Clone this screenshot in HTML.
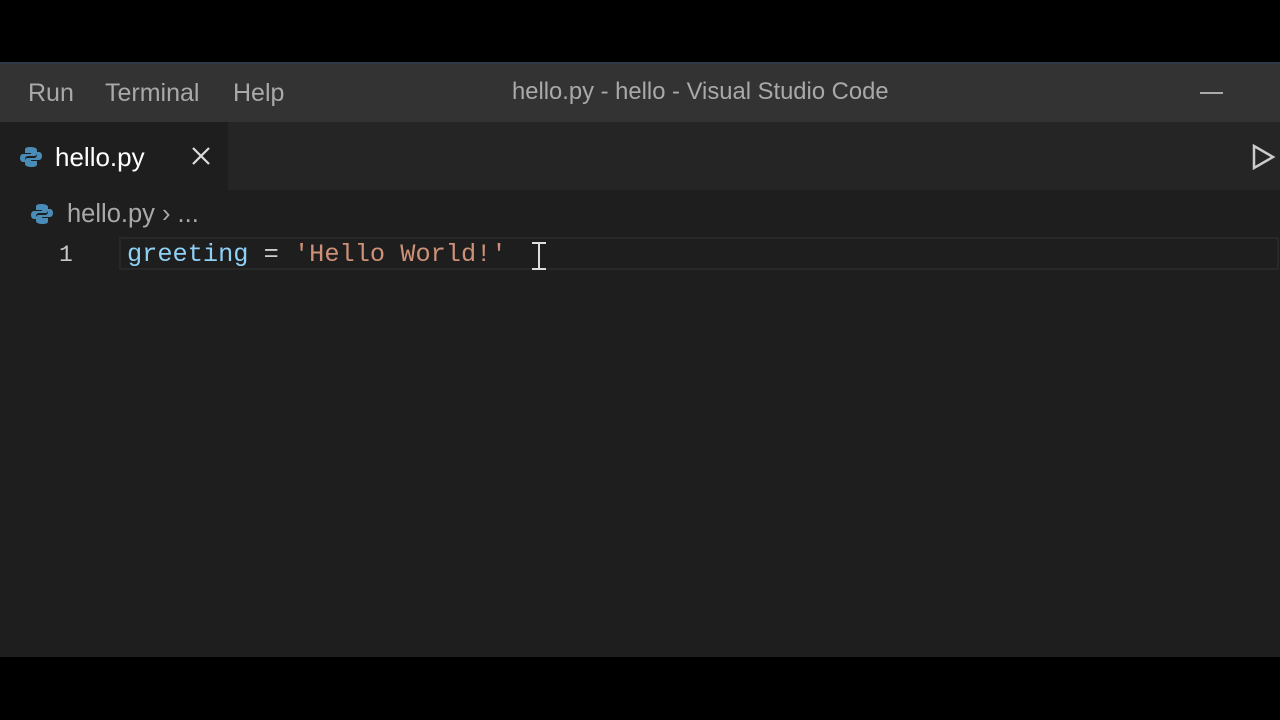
<!DOCTYPE html>
<html><head><style>
body{margin:0;width:1280px;height:720px;background:#000;overflow:hidden;font-family:"Liberation Sans",sans-serif;position:relative}
.tb{position:absolute;top:62px;left:0;width:1280px;height:60px;background:#333334;border-top:2px solid #2f3a48;box-sizing:border-box}
.menu{position:absolute;top:15px;font-size:25px;color:#a9a9a9}
.tabs{position:absolute;top:122px;left:0;width:1280px;height:68px;background:#252526}
.tab{position:absolute;left:0;top:0;width:228px;height:68px;background:#1e1e1e}
.ed{position:absolute;top:190px;left:0;width:1280px;height:467px;background:#1e1e1e}
.code{position:absolute;font-family:"Liberation Mono",monospace;font-size:25.3px;top:240px;left:127px}
</style></head><body>
<div class="tb">
<span class="menu" style="left:28px">Run</span>
<span class="menu" style="left:105px">Terminal</span>
<span class="menu" style="left:233px">Help</span>
<span class="menu" style="left:512px;font-size:23.8px;top:14px">hello.py - hello - Visual Studio Code</span>
<div style="position:absolute;left:1200px;top:28px;width:23px;height:2px;background:#aaa"></div>
</div>
<div class="tabs"><div class="tab">
<svg style="position:absolute;left:20px;top:24px" width="22" height="22" viewBox="0 0 22 22"><path d="M10 1C5 1 5 3 5 4v3h6v1H3C1 8 0 10 0 12s1 4 3 4h2v-3c0-2 2-3 3-3h6c2 0 3-1 3-3V4c0-2-3-3-7-3z" fill="#4a8cb8"/><path d="M12 21c5 0 5-2 5-3v-3h-6v-1h8c2 0 3-2 3-4s-1-4-3-4h-2v3c0 2-2 3-3 3H8c-2 0-3 1-3 3v3c0 2 3 3 7 3z" fill="#4a8cb8"/></svg>
<span style="position:absolute;left:55px;top:20px;font-size:26px;color:#fff">hello.py</span>
<svg style="position:absolute;left:191px;top:146px;position:fixed" width="20" height="20" viewBox="0 0 20 20"><path d="M2 2L18 18M18 2L2 18" stroke="#ddd" stroke-width="2.2"/></svg>
</div>
<svg style="position:absolute;left:1252px;top:22px" width="24" height="26" viewBox="0 0 24 26"><path d="M2 2L21 13L2 24Z" fill="none" stroke="#ccc" stroke-width="2.5"/></svg>
</div>
<div class="ed"></div>
<svg style="position:absolute;left:31px;top:203px" width="22" height="22" viewBox="0 0 22 22"><path d="M10 1C5 1 5 3 5 4v3h6v1H3C1 8 0 10 0 12s1 4 3 4h2v-3c0-2 2-3 3-3h6c2 0 3-1 3-3V4c0-2-3-3-7-3z" fill="#4a8cb8"/><path d="M12 21c5 0 5-2 5-3v-3h-6v-1h8c2 0 3-2 3-4s-1-4-3-4h-2v3c0 2-2 3-3 3H8c-2 0-3 1-3 3v3c0 2 3 3 7 3z" fill="#4a8cb8"/></svg>
<span style="position:absolute;left:67px;top:200px;font-size:25.5px;color:#a9a9a9">hello.py › ...</span>
<div style="position:absolute;left:119px;top:237px;width:1160px;height:33px;border:2px solid #282828;box-sizing:border-box"></div>
<span style="position:absolute;left:59px;top:242px;font-size:23px;color:#c8c8c8;font-family:'Liberation Mono',monospace">1</span>
<div class="code"><span style="color:#8fd0f5">greeting</span><span style="color:#ccc"> = </span><span style="color:#ce9178">'Hello World!'</span></div>
<div style="position:absolute;left:538px;top:243px;width:2px;height:26px;background:#ddd"></div>
<div style="position:absolute;left:532px;top:242px;width:14px;height:2px;background:#ddd"></div>
<div style="position:absolute;left:532px;top:268px;width:14px;height:2px;background:#ddd"></div>
</body></html>
